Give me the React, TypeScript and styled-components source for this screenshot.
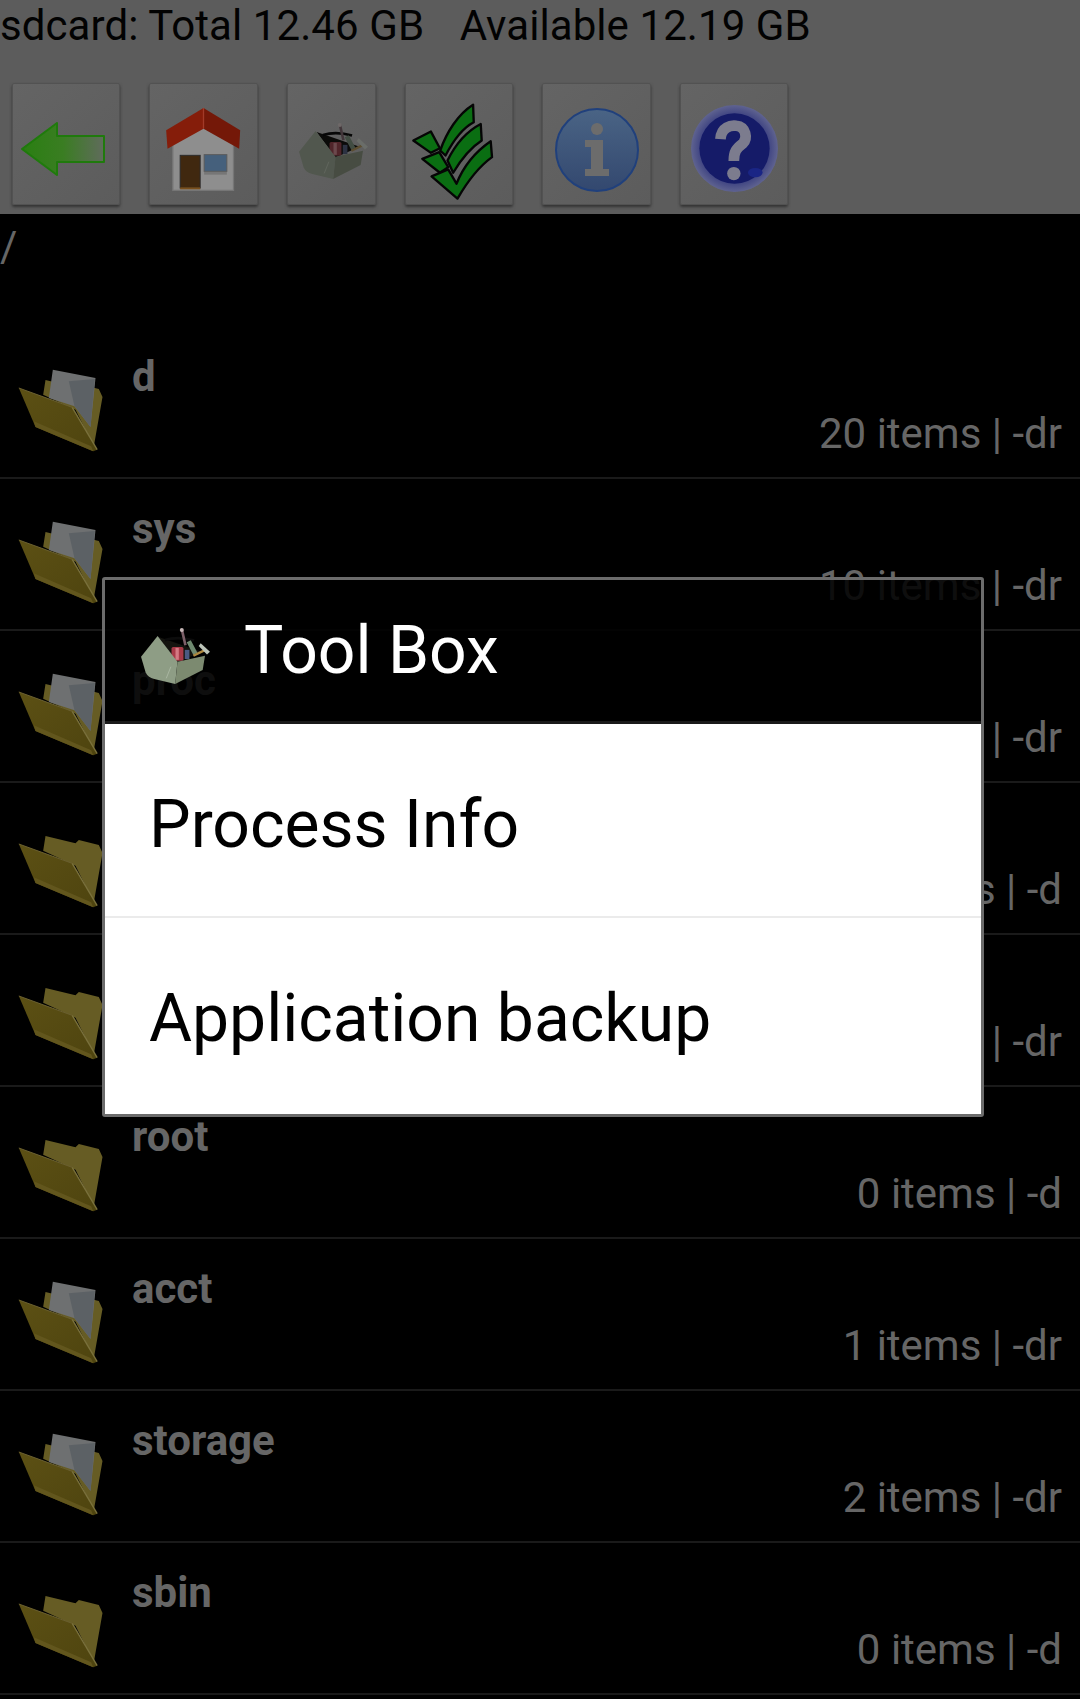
import React from "react"
import styled, { createGlobalStyle } from "styled-components"

const GlobalStyle = createGlobalStyle`
  html, body {
    margin: 0;
    padding: 0;
    background: #000;
    font-family: Roboto, "Liberation Sans", sans-serif;
  }
`

const Screen = styled.div`
  position: relative;
  width: 1080px;
  height: 1699px;
  overflow: hidden;
  background: #000;
`

const TopBar = styled.div`
  height: 214px;
  background: #5c5c5c;
`

const StorageLine = styled.div`
  height: 83px;
  padding-top: 2px;
  box-sizing: border-box;
  font-size: 42px;
  line-height: 47px;
  letter-spacing: 0.08px;
  color: #020202;
  white-space: pre;
`

const Available = styled.span`
  margin-left: 4px;
`

const Toolbar = styled.div`
  display: flex;
  gap: 29px;
  padding-left: 12px;
`

const ToolButton = styled.div<{ $w: number; $top: number; $left?: number; $right?: number }>`
  width: ${props => props.$w}px;
  height: 122px;
  box-sizing: border-box;
  display: flex;
  align-items: center;
  justify-content: center;
  padding: ${props => props.$top}px ${props => props.$right || 0}px 0 ${props => props.$left || 0}px;
  background: linear-gradient(135deg, #646464, #5c5c5c);
  border: 1px solid #525252;
  border-radius: 2px;
  box-shadow: 0 2px 3px #333;
`

const PathLine = styled.div`
  height: 113px;
  padding-top: 9px;
  box-sizing: border-box;
  font-size: 42px;
  line-height: 47px;
  color: #666;
`

const Row = styled.div`
  height: 152px;
  box-sizing: border-box;
  display: flex;
  border-bottom: 2px solid #1a1a1a;
`

const FolderCell = styled.div`
  width: 132px;
  flex: none;
  padding: 41px 0 0 17px;
  box-sizing: border-box;
`

const RowBody = styled.div`
  flex: 1;
  padding: 27px 18px 0 0;
`

const RowName = styled.div`
  font-size: 42px;
  font-weight: 700;
  line-height: 46px;
  color: #666;
`

const RowMeta = styled.div`
  margin-top: 10px;
  font-size: 42px;
  line-height: 47px;
  text-align: right;
  color: #666;
`

const Dialog = styled.div`
  position: absolute;
  left: 102px;
  top: 577px;
  width: 882px;
  height: 540px;
  box-sizing: border-box;
  border: 3px solid #6c6c6c;
  border-radius: 3px;
  display: flex;
  flex-direction: column;
`

const DialogHeader = styled.div`
  height: 144px;
  flex: none;
  box-sizing: border-box;
  display: flex;
  align-items: center;
  gap: 33px;
  padding: 0 0 0 35px;
  background: rgba(0, 0, 0, 0.86);
  border-bottom: 3px solid #1a1a1a;
`

const HeaderIcon = styled.div`
  padding-top: 11px;
`

const DialogTitle = styled.div`
  font-size: 66px;
  color: #fff;
`

const DialogList = styled.div`
  flex: 1;
  background: #fff;
`

const DialogItem = styled.div<{ $h: number; $top: number; $line?: boolean }>`
  height: ${props => props.$h}px;
  box-sizing: border-box;
  display: flex;
  align-items: center;
  padding: ${props => props.$top}px 0 0 44px;
  font-size: 66px;
  color: #000;
  border-bottom: ${props => (props.$line ? "2px solid #ebebeb" : "none")};
`

const SoftSvg = styled.svg`
  display: block;
  filter: blur(0.6px);
`

const BoxSvg = styled.svg<{ $dim?: boolean }>`
  display: block;
  filter: blur(0.6px) ${props => (props.$dim ? "brightness(0.56) saturate(0.7)" : "")};
`

const BackArrow = () => (
  <SoftSvg width="84" height="56" viewBox="0 0 84 56">
    <defs>
      <linearGradient id="arrowFill" x1="0" x2="1" y1="0" y2="0">
        <stop offset="0" stopColor="#2a7f12" />
        <stop offset="0.5" stopColor="#3a7d22" />
        <stop offset="1" stopColor="#606b5c" />
      </linearGradient>
    </defs>
    <path
      d="M1 28 L36 2 V15 H83 V41 H36 V54 Z"
      fill="url(#arrowFill)"
      stroke="#1f7a0c"
      strokeWidth="2"
      strokeLinejoin="round"
    />
  </SoftSvg>
)

const HomeIcon = () => (
  <SoftSvg width="77" height="85" viewBox="90 35 230 255">
    <path d="M113 130 L205 70 L295 130 V285 H113 Z" fill="#8e8e8e" stroke="#767676" strokeWidth="4" />
    <rect x="135" y="180" width="60" height="98" fill="#40280f" stroke="#2c2c2c" strokeWidth="3" />
    <rect x="135" y="276" width="60" height="6" fill="#7a4f1c" />
    <rect x="207" y="178" width="68" height="50" fill="#45607c" stroke="#5a5a5a" strokeWidth="3" />
    <rect x="207" y="230" width="68" height="8" fill="#767676" />
    <path d="M205 38 L93 105 L97 160 L205 100 Z" fill="#851d0a" />
    <path d="M205 38 L315 105 L312 160 L205 100 Z" fill="#741808" />
    <path d="M205 38 V100" stroke="#a23a28" strokeWidth="4" />
  </SoftSvg>
)

const ToolBoxIcon = ({ dim }: { dim?: boolean }) => (
  <BoxSvg $dim={dim} width="71" height="58" viewBox="30 35 212 175">
    <path d="M85 65 L105 72 L215 110 L142 142 Z" fill="#14140f" />
    <path d="M104 74 Q145 62 192 76" fill="none" stroke="#0c0c0c" strokeWidth="8" />
    <path d="M155 42 L166 90" stroke="#7c5f68" strokeWidth="8" />
    <circle cx="155" cy="44" r="6" fill="#c8b8b8" />
    <rect x="124" y="95" width="36" height="42" rx="5" fill="#a83a48" />
    <rect x="136" y="98" width="10" height="36" fill="#d47a84" />
    <rect x="164" y="104" width="14" height="28" fill="#4a5a82" />
    <path d="M176 78 L196 116" stroke="#6f8a70" strokeWidth="14" />
    <path d="M190 122 L226 104" stroke="#b08a40" strokeWidth="7" />
    <path d="M212 84 L240 110 L231 118 L206 92 Z" fill="#bcc4b8" />
    <path d="M32 125 L82 62 L142 140 L135 207 L72 192 Q52 186 46 172 Z" fill="#8e9d85" />
    <path d="M142 140 L225 122 L218 165 L135 207 Z" fill="#7c8a70" />
    <path d="M108 190 L122 155" stroke="#a8b5a0" strokeWidth="3" />
  </BoxSvg>
)

const CheckIcon = () => (
  <SoftSvg width="85" height="99" viewBox="18 20 256 296">
    <g fill="#0a6e12" stroke="#050505" strokeWidth="7" strokeLinejoin="round">
      <path d="M25 135 L78 108 L105 158 L78 172 Z" />
      <path d="M106 165 C125 110 160 55 205 27 L207 80 C178 95 148 130 122 180 Z" />
      <path d="M52 190 L103 170 L130 215 L105 232 Z" />
      <path d="M128 195 C150 150 180 110 228 85 L231 135 C200 155 170 190 145 232 Z" />
      <path d="M80 243 L130 222 L155 265 C175 215 210 170 258 137 L262 185 C220 215 190 255 158 310 Z" />
    </g>
  </SoftSvg>
)

const InfoIcon = () => (
  <SoftSvg width="86" height="86" viewBox="0 0 86 86">
    <defs>
      <linearGradient id="infoFill" x1="0" x2="0" y1="0" y2="1">
        <stop offset="0" stopColor="#4a6485" />
        <stop offset="1" stopColor="#33486f" />
      </linearGradient>
    </defs>
    <circle cx="43" cy="43" r="41" fill="url(#infoFill)" stroke="#20407c" strokeWidth="2" />
    <circle cx="43" cy="22" r="6" fill="#6c6c6c" />
    <path d="M31 33 H49 V62 H55 V69 H31 V62 H37 V40 H31 Z" fill="#6c6c6c" />
  </SoftSvg>
)

const HelpIcon = () => (
  <SoftSvg width="89" height="89" viewBox="37 27 266 266">
    <defs>
      <radialGradient id="helpRing">
        <stop offset="0.75" stopColor="#3a3f80" />
        <stop offset="1" stopColor="#5f6390" />
      </radialGradient>
    </defs>
    <circle cx="170" cy="160" r="130" fill="url(#helpRing)" />
    <circle cx="170" cy="160" r="105" fill="#151b68" />
    <ellipse cx="232" cy="232" rx="22" ry="14" fill="#1a2585" />
    <path
      d="M128 132 C130 95 160 90 175 92 C205 95 210 130 195 145 C175 160 168 170 168 197"
      fill="none"
      stroke="#7c7c8e"
      strokeWidth="32"
    />
    <circle cx="168" cy="235" r="20" fill="#7c7c8e" />
  </SoftSvg>
)

const FolderIcon = ({ paper }: { paper: boolean }) => (
  <SoftSvg width="87" height="85" viewBox="50 85 260 255">
    <defs>
      <linearGradient id="folderFront" x1="0" x2="1" y1="0" y2="1">
        <stop offset="0" stopColor="#5c5014" />
        <stop offset="1" stopColor="#4e440f" />
      </linearGradient>
    </defs>
    <path
      d="M135 121 L128 165 L225 210 L280 320 L306 172 L295 148 L235 133 L225 143 Z"
      fill="#665c24"
    />
    {paper && <path d="M157 90 L285 115 L270 262 L222 200 L145 175 Z" fill="#6e7071" />}
    {paper && <path d="M205 125 L283 118 L270 262 L222 200 Z" fill="#5c6165" />}
    <path d="M55 145 L215 203 L290 330 L278 335 L105 262 Z" fill="url(#folderFront)" />
    <path d="M100 245 L272 320 L278 335 L105 262 Z" fill="#62561d" />
    <path d="M215 203 L290 330" stroke="#7a713c" strokeWidth="4" />
    <path d="M55 145 L215 203" stroke="#6b6030" strokeWidth="3" />
  </SoftSvg>
)

const rows = [
  { name: "d", meta: "20 items | -dr", paper: true },
  { name: "sys", meta: "10 items | -dr", paper: true },
  { name: "proc", meta: "233 items | -dr", paper: true },
  { name: "cache", meta: "0 items | -d", paper: false },
  { name: "config", meta: "0 items | -dr", paper: false },
  { name: "root", meta: "0 items | -d", paper: false },
  { name: "acct", meta: "1 items | -dr", paper: true },
  { name: "storage", meta: "2 items | -dr", paper: true },
  { name: "sbin", meta: "0 items | -d", paper: false },
]

const App = () => {
  return (
    <Screen>
      <GlobalStyle />
      <TopBar>
        <StorageLine>
          sdcard: Total 12.46 GB   <Available>Available 12.19 GB</Available>
        </StorageLine>
        <Toolbar>
          <ToolButton $w={108} $top={10} $right={6}><BackArrow /></ToolButton>
          <ToolButton $w={109} $top={10}><HomeIcon /></ToolButton>
          <ToolButton $w={89} $top={14} $left={3}><ToolBoxIcon dim /></ToolButton>
          <ToolButton $w={108} $top={14} $right={11}><CheckIcon /></ToolButton>
          <ToolButton $w={109} $top={12}><InfoIcon /></ToolButton>
          <ToolButton $w={108} $top={9} $left={1}><HelpIcon /></ToolButton>
        </Toolbar>
      </TopBar>
      <PathLine>/</PathLine>
      {rows.map(row => (
        <Row key={row.name}>
          <FolderCell><FolderIcon paper={row.paper} /></FolderCell>
          <RowBody>
            <RowName>{row.name}</RowName>
            <RowMeta>{row.meta}</RowMeta>
          </RowBody>
        </Row>
      ))}
      <Dialog>
        <DialogHeader>
          <HeaderIcon><ToolBoxIcon /></HeaderIcon>
          <DialogTitle>Tool Box</DialogTitle>
        </DialogHeader>
        <DialogList>
          <DialogItem $h={194} $top={8} $line>Process Info</DialogItem>
          <DialogItem $h={196} $top={4}>Application backup</DialogItem>
        </DialogList>
      </Dialog>
    </Screen>
  )
}

export default App
